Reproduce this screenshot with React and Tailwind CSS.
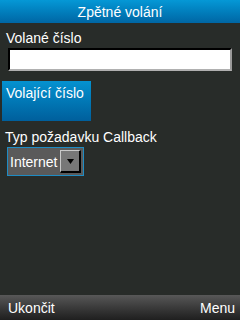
export default function App() {
  return (
    <div className="w-[240px] h-[320px] bg-[#282c29] flex flex-col text-white text-[14px] leading-[16px]" style={{ fontFamily: '"Liberation Sans", Arial, sans-serif' }}>
      <div className="h-[23px] shrink-0 flex items-center justify-center bg-gradient-to-b from-[#0598d6] to-[#0066a4]">
        Zpětné volání
      </div>

      <div className="mt-[7px] px-[6px]">Volané číslo</div>
      <div className="mt-[2px] mx-[8px] h-[23px] bg-white border-t-2 border-l-2 border-black border-r-2 border-b-2 border-r-[#9a9a9a] border-b-[#b0b0b0]" />

      <div className="mt-[10px] ml-[2px] w-[89px] h-[40px] pt-[4px] pl-[4px] bg-gradient-to-b from-[#0592d0] to-[#005f9c]">
        Volající číslo
      </div>

      <div className="mt-[8px] px-[5px]">Typ požadavku Callback</div>
      <div className="mt-[2px] ml-[7px] w-[77px] h-[29px] border border-[#1e8cc4] bg-[#5a5a5a] flex items-center pl-[2px] pr-[2px]">
        <span>Internet</span>
        <div className="ml-auto w-[21px] h-[23px] bg-[#777777] border-t border-l border-[#c8c8c8] border-r-2 border-b-2 border-r-black border-b-black flex items-center justify-center">
          <svg width="7" height="5" viewBox="0 0 7 5">
            <path d="M0 0 H7 L3.5 5 Z" fill="#000" />
          </svg>
        </div>
      </div>

      <div className="mt-auto h-[25px] shrink-0 flex items-center justify-between px-[8px] pr-[5px] bg-gradient-to-b from-[#585858] to-[#1f1f1f]">
        <span>Ukončit</span>
        <span>Menu</span>
      </div>
    </div>
  );
}
